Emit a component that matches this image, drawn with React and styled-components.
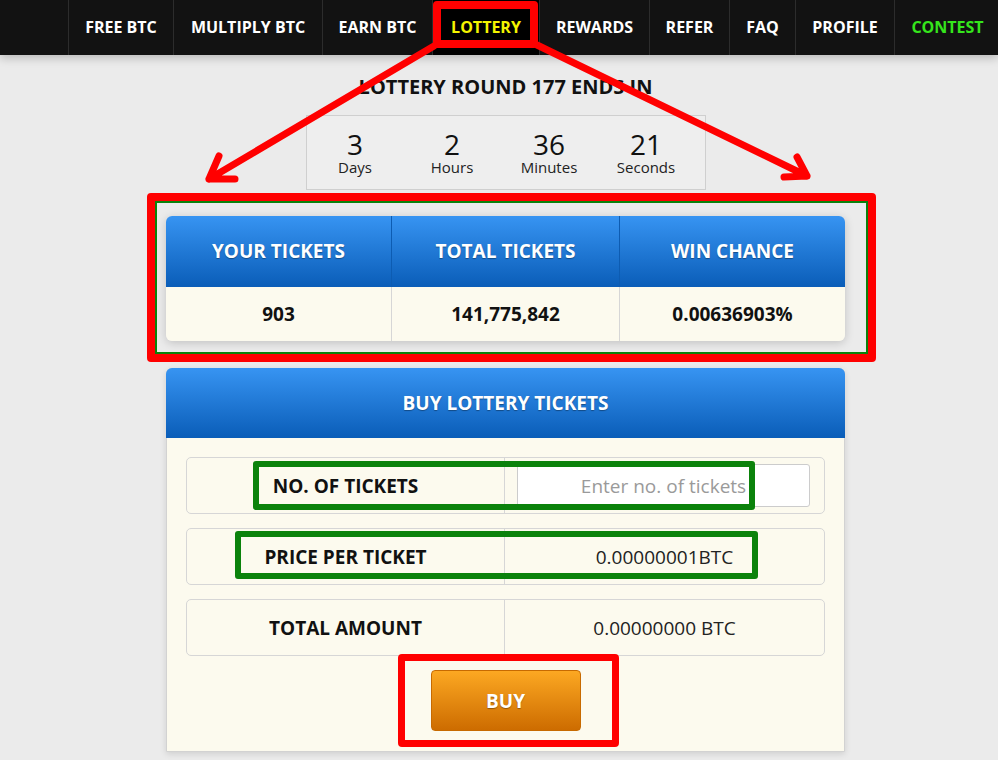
import React from 'react';
import styled, { createGlobalStyle } from 'styled-components';

const navItems = [
  { label: 'FREE BTC', width: 105 },
  { label: 'MULTIPLY BTC', width: 149 },
  { label: 'EARN BTC', width: 110 },
  { label: 'LOTTERY', width: 107, color: '#f4f400', active: true },
  { label: 'REWARDS', width: 110 },
  { label: 'REFER', width: 80 },
  { label: 'FAQ', width: 66 },
  { label: 'PROFILE', width: 99 },
  { label: 'CONTEST', width: 106, color: '#35e61c' },
];

const countdown = [
  { value: '3', unit: 'Days' },
  { value: '2', unit: 'Hours' },
  { value: '36', unit: 'Minutes' },
  { value: '21', unit: 'Seconds' },
];

const stats = [
  { title: 'YOUR TICKETS', value: '903' },
  { title: 'TOTAL TICKETS', value: '141,775,842' },
  { title: 'WIN CHANCE', value: '0.00636903%' },
];

function App() {
  return (
    <Page>
      <GlobalStyle />
      <Nav>
        {navItems.map((item) => (
          <NavItem
            key={item.label}
            $width={item.width}
            $color={item.color}
            $active={item.active}
          >
            {item.label}
            {item.active && <NavMark />}
          </NavItem>
        ))}
      </Nav>

      <Main>
        <Title>LOTTERY ROUND 177 ENDS IN</Title>
        <Countdown>
          {countdown.map((c) => (
            <TimeCell key={c.unit}>
              <TimeValue>{c.value}</TimeValue>
              <TimeUnit>{c.unit}</TimeUnit>
            </TimeCell>
          ))}
        </Countdown>

        <StatsWrap>
          <StatsGrid>
            {stats.map((s) => (
              <HeadCell key={s.title}>{s.title}</HeadCell>
            ))}
            {stats.map((s) => (
              <ValueCell key={s.title}>{s.value}</ValueCell>
            ))}
          </StatsGrid>
          <StatsMark />
        </StatsWrap>

        <BuyPanel>
          <PanelHeader>BUY LOTTERY TICKETS</PanelHeader>
          <PanelBody>
            <FormRow>
              <RowLabel>NO. OF TICKETS</RowLabel>
              <RowValue $align="flex-start">
                <TicketInput type="text" placeholder="Enter no. of tickets" />
              </RowValue>
              <GreenMark $top={3} $left={66} $right={69} $bottom={3} />
            </FormRow>
            <FormRow>
              <RowLabel>PRICE PER TICKET</RowLabel>
              <RowValue>0.00000001BTC</RowValue>
              <GreenMark $top={2} $left={48} $right={66} $bottom={5} />
            </FormRow>
            <FormRow>
              <RowLabel>TOTAL AMOUNT</RowLabel>
              <RowValue>0.00000000 BTC</RowValue>
            </FormRow>
            <ButtonWrap>
              <BuyButton>BUY</BuyButton>
              <ButtonMark />
            </ButtonWrap>
          </PanelBody>
        </BuyPanel>
      </Main>

      <Arrows width="998" height="760" viewBox="0 0 998 760">
        <g stroke="#ff0000" strokeWidth="7" strokeLinecap="round" fill="none">
          <path d="M434 46 L209 179 M209 179 L219 156 M209 179 L235 179" />
          <path d="M537 45 L807 176 M807 176 L797 157 M807 176 L784 177" />
        </g>
      </Arrows>
    </Page>
  );
}

export default App;



// styled-components
const GlobalStyle = createGlobalStyle`
  html, body {
    margin: 0;
    padding: 0;
  }
  body {
    background: #ebebeb;
    font-family: "Open Sans", "Liberation Sans", sans-serif;
    color: #111;
    overflow: hidden;
  }
`;

const Page = styled.div`
  position: relative;
  width: 998px;
  height: 760px;
  overflow: hidden;
  background: #ebebeb;
`;

const Nav = styled.nav`
  position: relative;
  z-index: 1;
  display: flex;
  height: 55px;
  padding-left: 68px;
  background: #121212;
  box-shadow: 0 3px 9px rgba(0, 0, 0, 0.22);
`;

const NavItem = styled.div`
  position: relative;
  flex-shrink: 0;
  width: ${(p) => p.$width}px;
  display: flex;
  align-items: center;
  justify-content: center;
  padding-bottom: 2px;
  border-left: 1px solid #2c2c2c;
  box-sizing: border-box;
  background: ${(p) => (p.$active ? '#000' : 'transparent')};
  color: ${(p) => p.$color || '#fff'};
  font-size: 16px;
  font-weight: 700;
  white-space: nowrap;
`;

const NavMark = styled.span`
  position: absolute;
  top: 1px;
  left: 0;
  right: 1px;
  height: 47px;
  box-sizing: border-box;
  border: 8px solid #ff0000;
  border-radius: 4px;
`;

const Main = styled.main`
  width: 679px;
  margin-left: 166px;
  display: flex;
  flex-direction: column;
  align-items: center;
`;

const Title = styled.h1`
  margin: 19px 0 0;
  font-size: 20px;
  line-height: 26px;
  font-weight: 700;
  color: #111;
`;

const Countdown = styled.div`
  margin-top: 15px;
  width: 400px;
  box-sizing: border-box;
  padding: 15px 0 13px;
  display: grid;
  grid-template-columns: repeat(4, 97px);
  border: 1px solid #cfcfcf;
  background: #eeeeee;
`;

const TimeCell = styled.div`
  display: flex;
  flex-direction: column;
  align-items: center;
`;

const TimeValue = styled.div`
  font-size: 28px;
  line-height: 27px;
  color: #111;
`;

const TimeUnit = styled.div`
  font-size: 15px;
  line-height: 18px;
  color: #222;
`;

const StatsWrap = styled.div`
  position: relative;
  width: 100%;
  margin-top: 26px;
`;

const StatsGrid = styled.div`
  display: grid;
  grid-template-columns: 225px 228px 1fr;
  border-radius: 6px;
  overflow: hidden;
  box-shadow: 0 2px 10px rgba(0, 0, 0, 0.18);
`;

const HeadCell = styled.div`
  height: 71px;
  display: flex;
  align-items: center;
  justify-content: center;
  padding-bottom: 2px;
  box-sizing: border-box;
  background: linear-gradient(#3794f2, #0a5db8);
  border-left: 1px solid #0d5cb2;
  &:first-child {
    border-left: none;
  }
  color: #fff;
  font-size: 19px;
  font-weight: 700;
  text-shadow: 0 1px 1px rgba(0, 0, 0, 0.35);
`;

const ValueCell = styled.div`
  height: 54px;
  display: flex;
  align-items: center;
  justify-content: center;
  box-sizing: border-box;
  background: #fcfaee;
  border-left: 1px solid #d6d6d6;
  &:nth-child(4) {
    border-left: none;
  }
  font-size: 19px;
  font-weight: 700;
  color: #111;
`;

const StatsMark = styled.div`
  position: absolute;
  top: -23px;
  left: -19px;
  right: -31px;
  bottom: -21px;
  border: 8px solid #ff0000;
  border-radius: 4px;
  box-shadow: inset 0 0 0 2px #0b820b;
  pointer-events: none;
`;

const BuyPanel = styled.section`
  width: 100%;
  margin-top: 27px;
  border: 1px solid #d2d2d2;
  border-radius: 6px 6px 0 0;
  box-sizing: border-box;
  background: #fcfaee;
  box-shadow: 0 2px 6px rgba(0, 0, 0, 0.12);
`;

const PanelHeader = styled.div`
  height: 70px;
  margin: -1px -1px 0;
  display: flex;
  align-items: center;
  justify-content: center;
  box-sizing: border-box;
  border-radius: 6px 6px 0 0;
  background: linear-gradient(#3794f2, #0a5db8);
  color: #fff;
  font-size: 19px;
  font-weight: 700;
  text-shadow: 0 1px 1px rgba(0, 0, 0, 0.35);
`;

const PanelBody = styled.div`
  padding: 19px 19px 20px;
  display: flex;
  flex-direction: column;
  gap: 14px;
`;

const FormRow = styled.div`
  position: relative;
  height: 57px;
  box-sizing: border-box;
  display: grid;
  grid-template-columns: 318px 1fr;
  border: 1px solid #d6d6d6;
  border-radius: 5px;
`;

const RowLabel = styled.div`
  display: flex;
  align-items: center;
  justify-content: center;
  border-right: 1px solid #d6d6d6;
  font-size: 19px;
  font-weight: 700;
  color: #111;
`;

const RowValue = styled.div`
  display: flex;
  align-items: center;
  justify-content: ${(p) => p.$align || 'center'};
  padding-left: ${(p) => (p.$align ? '12px' : '0')};
  font-size: 19px;
  color: #222;
`;

const TicketInput = styled.input`
  width: 293px;
  height: 43px;
  box-sizing: border-box;
  border: 1px solid #cccccc;
  border-radius: 3px;
  background: #fff;
  font-family: "Open Sans", "Liberation Sans", sans-serif;
  font-size: 19px;
  text-align: center;
  outline: none;
  &::placeholder {
    color: #9a9a9a;
  }
`;

const GreenMark = styled.div`
  position: absolute;
  top: ${(p) => p.$top}px;
  left: ${(p) => p.$left}px;
  right: ${(p) => p.$right}px;
  bottom: ${(p) => p.$bottom}px;
  border: 6px solid #0b820b;
  border-radius: 3px;
  pointer-events: none;
`;

const ButtonWrap = styled.div`
  position: relative;
  align-self: center;
`;

const BuyButton = styled.button`
  display: block;
  width: 150px;
  height: 61px;
  border: 1px solid #c76a00;
  border-radius: 4px;
  background: linear-gradient(#fca822, #cd6c00);
  color: #fff;
  font-family: "Open Sans", "Liberation Sans", sans-serif;
  font-size: 19px;
  font-weight: 700;
  text-shadow: 0 1px 1px rgba(0, 0, 0, 0.35);
  cursor: pointer;
`;

const ButtonMark = styled.div`
  position: absolute;
  top: -16px;
  left: -33px;
  right: -38px;
  bottom: -16px;
  border: 7px solid #ff0000;
  border-radius: 4px;
  pointer-events: none;
`;

const Arrows = styled.svg`
  position: absolute;
  top: 0;
  left: 0;
  z-index: 5;
  pointer-events: none;
`;
